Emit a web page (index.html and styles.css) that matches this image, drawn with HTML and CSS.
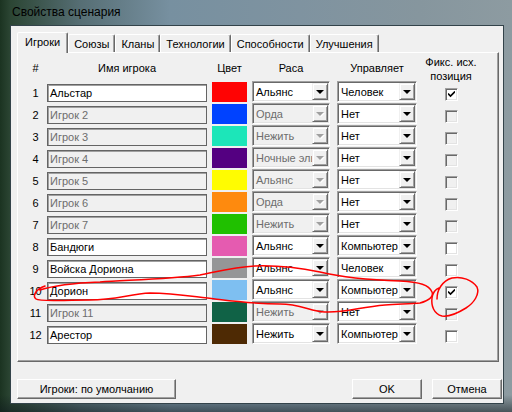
FILE: index.html
```html
<!DOCTYPE html>
<html lang="ru">
<head>
<meta charset="utf-8">
<title>Свойства сценария</title>
<link rel="stylesheet" href="styles.css">
</head>
<body>
<div class="window">
  <div class="titlebar">Свойства сценария</div>
  <div class="client">
    <div class="tabs">
      <div class="tab active">Игроки</div>
      <div class="tab">Союзы</div>
      <div class="tab">Кланы</div>
      <div class="tab">Технологии</div>
      <div class="tab">Способности</div>
      <div class="tab">Улучшения</div>
    </div>
    <div class="panel">
      <div class="h h-num">#</div>
      <div class="h h-name">Имя игрока</div>
      <div class="h h-color">Цвет</div>
      <div class="h h-race">Раса</div>
      <div class="h h-ctrl">Управляет</div>
      <div class="h h-fix">Фикс. исх.<br>позиция</div>

      <div class="num">1</div>
      <div class="edit">Альстар</div>
      <div class="swatch c1"></div>
      <div class="combo race"><span class="val">Альянс</span><span class="drop"><i></i></span></div>
      <div class="combo ctrl"><span class="val">Человек</span><span class="drop"><i></i></span></div>
      <div class="cbcell"><span class="cb checked"><svg viewBox="0 0 7 7" width="7" height="7"><path d="M0 2.5 L2.5 5 L7 0.5" fill="none" stroke="#000" stroke-width="1.6"/></svg></span></div>

      <div class="num">2</div>
      <div class="edit off">Игрок 2</div>
      <div class="swatch c2"></div>
      <div class="combo race off"><span class="val">Орда</span><span class="drop"><i></i></span></div>
      <div class="combo ctrl"><span class="val">Нет</span><span class="drop"><i></i></span></div>
      <div class="cbcell"><span class="cb off"></span></div>

      <div class="num">3</div>
      <div class="edit off">Игрок 3</div>
      <div class="swatch c3"></div>
      <div class="combo race off"><span class="val">Нежить</span><span class="drop"><i></i></span></div>
      <div class="combo ctrl"><span class="val">Нет</span><span class="drop"><i></i></span></div>
      <div class="cbcell"><span class="cb off"></span></div>

      <div class="num">4</div>
      <div class="edit off">Игрок 4</div>
      <div class="swatch c4"></div>
      <div class="combo race off"><span class="val">Ночные эльфы</span><span class="drop"><i></i></span></div>
      <div class="combo ctrl"><span class="val">Нет</span><span class="drop"><i></i></span></div>
      <div class="cbcell"><span class="cb off"></span></div>

      <div class="num">5</div>
      <div class="edit off">Игрок 5</div>
      <div class="swatch c5"></div>
      <div class="combo race off"><span class="val">Альянс</span><span class="drop"><i></i></span></div>
      <div class="combo ctrl"><span class="val">Нет</span><span class="drop"><i></i></span></div>
      <div class="cbcell"><span class="cb off"></span></div>

      <div class="num">6</div>
      <div class="edit off">Игрок 6</div>
      <div class="swatch c6"></div>
      <div class="combo race off"><span class="val">Орда</span><span class="drop"><i></i></span></div>
      <div class="combo ctrl"><span class="val">Нет</span><span class="drop"><i></i></span></div>
      <div class="cbcell"><span class="cb off"></span></div>

      <div class="num">7</div>
      <div class="edit off">Игрок 7</div>
      <div class="swatch c7"></div>
      <div class="combo race off"><span class="val">Нежить</span><span class="drop"><i></i></span></div>
      <div class="combo ctrl"><span class="val">Нет</span><span class="drop"><i></i></span></div>
      <div class="cbcell"><span class="cb off"></span></div>

      <div class="num">8</div>
      <div class="edit">Бандюги</div>
      <div class="swatch c8"></div>
      <div class="combo race"><span class="val">Альянс</span><span class="drop"><i></i></span></div>
      <div class="combo ctrl"><span class="val">Компьютер</span><span class="drop"><i></i></span></div>
      <div class="cbcell"><span class="cb"></span></div>

      <div class="num">9</div>
      <div class="edit">Войска Дориона</div>
      <div class="swatch c9"></div>
      <div class="combo race"><span class="val">Альянс</span><span class="drop"><i></i></span></div>
      <div class="combo ctrl"><span class="val">Человек</span><span class="drop"><i></i></span></div>
      <div class="cbcell"><span class="cb"></span></div>

      <div class="num">10</div>
      <div class="edit">Дорион</div>
      <div class="swatch c10"></div>
      <div class="combo race"><span class="val">Альянс</span><span class="drop"><i></i></span></div>
      <div class="combo ctrl"><span class="val">Компьютер</span><span class="drop"><i></i></span></div>
      <div class="cbcell"><span class="cb checked"><svg viewBox="0 0 7 7" width="7" height="7"><path d="M0 2.5 L2.5 5 L7 0.5" fill="none" stroke="#000" stroke-width="1.6"/></svg></span></div>

      <div class="num">11</div>
      <div class="edit off">Игрок 11</div>
      <div class="swatch c11"></div>
      <div class="combo race off"><span class="val">Нежить</span><span class="drop"><i></i></span></div>
      <div class="combo ctrl"><span class="val">Нет</span><span class="drop"><i></i></span></div>
      <div class="cbcell"><span class="cb off"></span></div>

      <div class="num">12</div>
      <div class="edit">Арестор</div>
      <div class="swatch c12"></div>
      <div class="combo race"><span class="val">Нежить</span><span class="drop"><i></i></span></div>
      <div class="combo ctrl"><span class="val">Компьютер</span><span class="drop"><i></i></span></div>
      <div class="cbcell"><span class="cb"></span></div>
    </div>
    <div class="footer">
      <div class="btn btn-default">Игроки: по умолчанию</div>
      <div class="btn btn-ok">OK</div>
      <div class="btn btn-cancel">Отмена</div>
    </div>
  </div>
</div>
<svg class="annot" width="512" height="412" viewBox="0 0 512 412">
  <path d="M45 286 C36 289 32 296 36 299 C40 302 60 300 90 300 C115 300 130 294 150 293 C175 293 195 297 215 299 C240 302 255 304 280 304 C300 304 310 311 325 312 C345 313 360 307 385 305 C400 304 412 304 420 303 C428 301 434 297 432 292 C429 285 420 282 400 281 C370 280 345 278 320 272 C300 268 280 265 255 266 C235 267 220 271 200 275 C170 279 130 280 100 282 C75 283 55 285 40 290" fill="none" stroke="#f00" stroke-width="1.5" stroke-linecap="round"/>
  <path d="M437 299 C437 290 442 281 452 278 C462 276 472 280 477 287 C480 294 474 303 466 308 C458 313 449 317 442 316 C434 314 431 306 432 298 C433 292 436 289 439 288" fill="none" stroke="#f00" stroke-width="1.5" stroke-linecap="round"/>
</svg>
</body>
</html>
```

FILE: styles.css
```css
* { box-sizing: border-box; }

body {
  margin: 0;
  width: 512px;
  height: 412px;
  overflow: hidden;
  position: relative;
  font-family: "Liberation Sans", Arial, sans-serif;
  font-size: 11px;
  color: #000;
  background:
    linear-gradient(180deg, rgba(0,0,0,0) 0, rgba(0,0,0,0) 395px, rgba(15,25,30,.55) 412px),
    linear-gradient(90deg, #1b3321 0, #2b4533 10px, #566e74 80px, #7790a0 170px, #7f93a0 300px, #86969e 420px, #8d9ba1 512px);
}

.window {
  display: flex;
  flex-direction: column;
  height: 412px;
}

.titlebar {
  height: 25px;
  padding-left: 12px;
  line-height: 25px;
  font-size: 12px;
  color: #000;
}

.client {
  margin-left: 10px;
  width: 494px;
  height: 379px;
  border: 1px solid #33434a;
  background: #f0f0f0;
  padding: 6px 4px 0 6px;
  display: flex;
  flex-direction: column;
}

/* tabs */
.tabs {
  display: flex;
  align-items: flex-end;
  height: 20px;
}
.tab {
  height: 18px;
  padding: 0 5px;
  border: 1px solid;
  border-bottom: 0;
  border-color: #fff #696969 transparent #fff;
  border-radius: 2px 2px 0 0;
  box-shadow: inset -1px 0 #a0a0a0;
  line-height: 18px;
  white-space: nowrap;
}
.tab.active {
  height: 21px;
  margin-bottom: -1px;
  padding: 0 7px;
  line-height: 19px;
  background: #f0f0f0;
  position: relative;
  z-index: 1;
}

/* panel */
.panel {
  height: 310px;
  border: 1px solid;
  border-color: #fff #696969 #696969 #fff;
  box-shadow: inset -1px -1px #a0a0a0;
  padding: 2px 0 0 6px;
  display: grid;
  grid-template-columns: 23px 165px 40px 85px 80px 68px;
  grid-template-rows: 26px repeat(12, 22px);
}

.h {
  align-self: center;
  text-align: center;
  line-height: 14px;
  white-space: nowrap;
}
.h-num { justify-self: center; }
.h-name { width: 160px; }
.h-color { width: 35px; }
.h-race { width: 78px; }
.h-ctrl { width: 80px; }
.h-fix { width: 68px; align-self: end; margin-bottom: -2px; }

.num {
  text-align: center;
  line-height: 24px;
}

.edit {
  width: 160px;
  height: 18px;
  margin-top: 3px;
  border: 1px solid #646464;
  box-shadow: inset 1px 1px #a0a0a0;
  background: #fff;
  padding-left: 2px;
  line-height: 16px;
  white-space: nowrap;
  overflow: hidden;
}
.edit.off {
  background: #f0f0f0;
  color: #6d6d6d;
}

.swatch {
  width: 35px;
  height: 20px;
  margin-top: 1px;
}
.c1 { background: #ff0303; }
.c2 { background: #0042ff; }
.c3 { background: #1ce6b9; }
.c4 { background: #540081; }
.c5 { background: #fffc01; }
.c6 { background: #fe8a0e; }
.c7 { background: #20c000; }
.c8 { background: #e55bb0; }
.c9 { background: #959697; }
.c10 { background: #7ebff1; }
.c11 { background: #106246; }
.c12 { background: #4e2a04; }

.combo {
  height: 21px;
  border: 1px solid;
  border-color: #a0a0a0 #fff #fff #a0a0a0;
  box-shadow: inset 1px 1px #696969, inset -1px -1px #e3e3e3;
  background: #fff;
  display: flex;
  align-items: center;
  padding: 1px;
}
.combo.race { width: 78px; }
.combo.ctrl { width: 80px; }
.combo.off { background: #f0f0f0; color: #6d6d6d; }

.val {
  flex: 1;
  min-width: 0;
  overflow: hidden;
  white-space: nowrap;
  padding-left: 2px;
  line-height: 17px;
  padding-top: 1px;
}

.drop {
  width: 16px;
  height: 17px;
  flex: none;
  background: #f0f0f0;
  border: 1px solid;
  border-color: #f0f0f0 #696969 #696969 #f0f0f0;
  box-shadow: inset 1px 1px #fff, inset -1px -1px #a0a0a0;
  display: flex;
  align-items: center;
  justify-content: center;
}
.drop i {
  display: block;
  width: 0;
  height: 0;
  border-left: 4px solid transparent;
  border-right: 4px solid transparent;
  border-top: 4px solid #000;
  margin-top: 1px;
}
.combo.off .drop i {
  border-top-color: #a0a0a0;
  filter: drop-shadow(1px 1px 0 #fff);
}

.cbcell {
  padding: 7px 0 0 28px;
}
.cb {
  display: flex;
  align-items: center;
  justify-content: center;
  width: 13px;
  height: 13px;
  border: 1px solid;
  border-color: #a0a0a0 #fff #fff #a0a0a0;
  box-shadow: inset 1px 1px #696969, inset -1px -1px #e3e3e3;
  background: #fff;
}
.cb.off { background: #f0f0f0; }
.cb svg { display: block; }

/* footer */
.footer {
  display: flex;
  margin-top: 17px;
  margin-right: -3px;
}
.btn {
  height: 20px;
  border: 1px solid;
  border-color: #fff #696969 #696969 #fff;
  box-shadow: inset -1px -1px #a0a0a0;
  background: #f0f0f0;
  text-align: center;
  line-height: 18px;
  white-space: nowrap;
}
.btn-default { width: 159px; }
.btn-ok { width: 70px; margin-left: auto; }
.btn-cancel { width: 70px; margin-left: 10px; }

.annot {
  position: absolute;
  left: 0;
  top: 0;
  pointer-events: none;
}
```
